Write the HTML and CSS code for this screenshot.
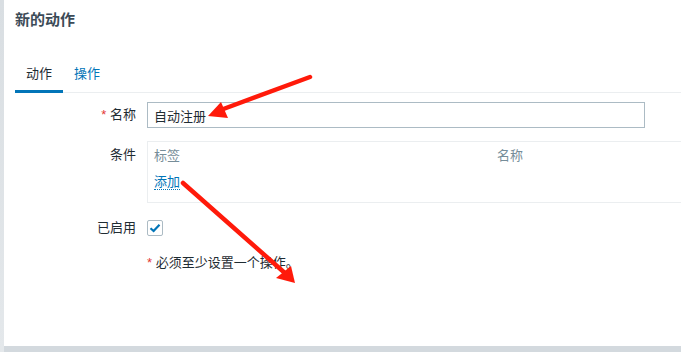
FILE: index.html
```html
<!DOCTYPE html>
<html lang="zh">

<head>
	<meta charset="utf-8">
	<title>新的动作</title>
	<link rel="stylesheet" href="styles.css">
</head>

<body>
	<div class="side"></div>
	<div class="dialog">
		<h2 class="titel">新的动作</h2>

		<ul class="tabs">
			<li class="tab aktiv">动作</li>
			<li class="tab">操作</li>
		</ul>

		<div class="form">
			<label class="lbl"><span class="stjerne">*</span> 名称</label>
			<div class="felt"><input class="input" type="text" value="自动注册"></div>

			<label class="lbl top">条件</label>
			<div class="felt">
				<div class="betingelser">
					<div class="hoved">
						<span class="kol1">标签</span>
						<span>名称</span>
					</div>
					<a class="link" href="#">添加</a>
				</div>
			</div>

			<label class="lbl aktiveret">已启用</label>
			<div class="felt"><span class="check"><svg width="12" height="10" viewBox="0 0 12 10"><path d="M1.5 5.2 L4.6 8 L10.5 1.8" fill="none" stroke="#0275b8" stroke-width="2.2"/></svg></span></div>

			<span></span>
			<p class="note"><span class="stjerne">*</span> 必须至少设置一个操作。</p>
		</div>

		<svg class="pile" width="681" height="352" viewBox="0 0 681 352">
			<g stroke="#ff1a0a" stroke-width="4.5" stroke-linecap="round" fill="#ff1a0a">
				<line x1="310" y1="77" x2="218" y2="111"/>
				<line x1="183" y1="183" x2="286" y2="274"/>
			</g>
			<polygon points="208,116 221,102 228,118" fill="#ff1a0a"/>
			<polygon points="295,283 276,278 291,266" fill="#ff1a0a"/>
		</svg>
	</div>
</body>

</html>
```

FILE: styles.css
```css
* {
	margin: 0;
	padding: 0;
	box-sizing: border-box;
}

body {
	background: #d3d9de;
	font-family: "Liberation Sans", "Noto Sans CJK SC", sans-serif;
	font-size: 13px;
	color: #1f2c33;
	display: flex;
	height: 352px;
	overflow: hidden;
}

.side {
	width: 4px;
	flex-shrink: 0;
	background: linear-gradient(#d9dee2 0, #e4e8eb 100%);
}

.dialog {
	position: relative;
	flex: 1;
	min-width: 0;
	height: 346px;
	background: #fff;
	padding: 11px 0 0 11px;
	overflow: hidden;
}

.titel {
	font-size: 15px;
	font-weight: bold;
	color: #3c4b57;
	line-height: 18px;
}

.tabs {
	list-style: none;
	display: flex;
	margin-top: 32px;
	border-bottom: 1px solid #ebeef0;
}

.tab {
	padding: 5px 11px 8px;
	color: #0275b8;
	line-height: 16px;
}

.aktiv {
	color: #1f2c33;
	border-bottom: 3px solid #0275b8;
	margin-bottom: -1px;
}

.form {
	display: grid;
	grid-template-columns: 121px 1fr;
	column-gap: 11px;
	row-gap: 13px;
	margin-top: 9px;
	align-items: center;
}

.lbl {
	text-align: right;
	line-height: 16px;
}

.lbl.top {
	align-self: start;
	padding-top: 6px;
}

.lbl.aktiveret {
	padding-top: 4px;
}

.stjerne {
	color: #e33734;
}

.felt {
	display: flex;
}

.input {
	width: 498px;
	height: 26px;
	border: 1px solid #acbbc4;
	padding: 0 6px;
	font: inherit;
	color: #1f2c33;
}

.betingelser {
	width: 540px;
	height: 62px;
	border: 1px solid #ebeef0;
	padding: 6px 6px 0;
}

.hoved {
	color: #768d99;
	display: flex;
	line-height: 16px;
}

.kol1 {
	width: 343px;
}

.link {
	display: inline-block;
	margin-top: 10px;
	color: #0275b8;
	text-decoration: none;
	border-bottom: 1px dotted #0275b8;
	line-height: 15px;
}

.check {
	margin-top: 4px;
	width: 16px;
	height: 16px;
	border: 1px solid #acbbc4;
	border-radius: 2px;
	display: flex;
	align-items: center;
	justify-content: center;
}

.note {
	margin-top: 6px;
	line-height: 16px;
}

.pile {
	position: absolute;
	left: -4px;
	top: 0;
	pointer-events: none;
}
```
